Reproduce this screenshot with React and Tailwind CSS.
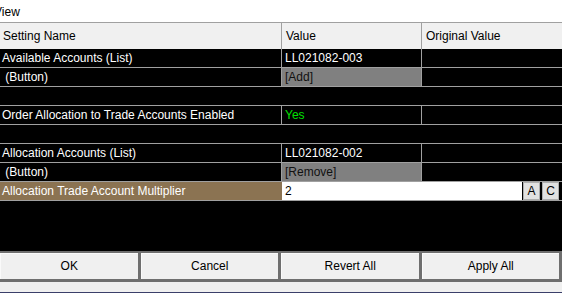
const font = { fontFamily: '"Liberation Sans", Arial, sans-serif' };

const rows = [
  { type: "item", name: "Available Accounts (List)", value: "LL021082-003" },
  { type: "button", name: " (Button)", value: "[Add]" },
  { type: "blank" },
  { type: "item", name: "Order Allocation to Trade Accounts Enabled", value: "Yes", green: true },
  { type: "blank" },
  { type: "item", name: "Allocation Accounts (List)", value: "LL021082-002" },
  { type: "button", name: " (Button)", value: "[Remove]" },
];

function Row({ row }) {
  if (row.type === "blank") {
    return <div className="h-[19px] border-b border-[#a0a0a0] bg-black" />;
  }
  return (
    <div className="flex h-[19px] border-b border-[#a0a0a0] bg-black text-white">
      <div className="w-[282px] shrink-0 border-r border-[#a0a0a0] pl-[2px] leading-[18px] whitespace-pre">
        {row.name}
      </div>
      <div
        className={`w-[140px] shrink-0 border-r border-[#a0a0a0] pl-[3px] leading-[18px] ${
          row.type === "button" ? "bg-[#808080] text-[#111]" : row.green ? "text-[#00e000]" : "text-white"
        }`}
      >
        {row.value}
      </div>
      <div className="flex-1" />
    </div>
  );
}

export default function App() {
  return (
    <div className="w-[562px] h-[293px] overflow-hidden bg-white text-[12px] flex flex-col" style={font}>
      {/* menu strip */}
      <div className="h-[22px] bg-white leading-[24px] -ml-[6px] text-black">View</div>

      {/* header */}
      <div className="flex h-[27px] border-t border-[#a0a0a0] bg-[#f0f0f0] text-black">
        <div className="w-[282px] shrink-0 border-r border-[#a0a0a0] pl-[3px] leading-[26px]">Setting Name</div>
        <div className="w-[140px] shrink-0 border-r border-[#a0a0a0] pl-[4px] leading-[26px]">Value</div>
        <div className="flex-1 pl-[4px] leading-[26px]">Original Value</div>
      </div>

      {rows.map((r, i) => (
        <Row key={i} row={r} />
      ))}

      {/* selected / editing row */}
      <div className="flex h-[19px] border-b border-[#a0a0a0] bg-black">
        <div className="w-[282px] shrink-0 bg-[#8b7352] pl-[2px] leading-[18px] text-white">
          Allocation Trade Account Multiplier
        </div>
        <div className="flex flex-1 items-stretch">
          <div className="w-[240px] bg-white pl-[3px] leading-[18px] text-black">2</div>
          <div className="ml-[1px] w-[17px] border border-[#adadad] bg-[#e1e1e1] text-center leading-[16px] text-black">
            A
          </div>
          <div className="ml-[2px] w-[17px] border border-[#adadad] bg-[#e1e1e1] text-center leading-[16px] text-black">
            C
          </div>
        </div>
      </div>

      {/* empty grid area */}
      <div className="flex-1 bg-black" />

      {/* button bar */}
      <div className="grid grid-cols-4 gap-[3px] bg-[#6f6f6f] pt-[2px] pb-[3px] pr-[3px]">
        {["OK", "Cancel", "Revert All", "Apply All"].map((b) => (
          <div
            key={b}
            className="h-[26px] border-t border-l border-[#fafafa] bg-[#f0f0f0] text-center leading-[25px] text-black"
          >
            {b}
          </div>
        ))}
      </div>
      <div className="h-[10px] bg-[#f0f0f0]" />
      <div className="h-[1px] bg-[#3a3f6a]" />
    </div>
  );
}
